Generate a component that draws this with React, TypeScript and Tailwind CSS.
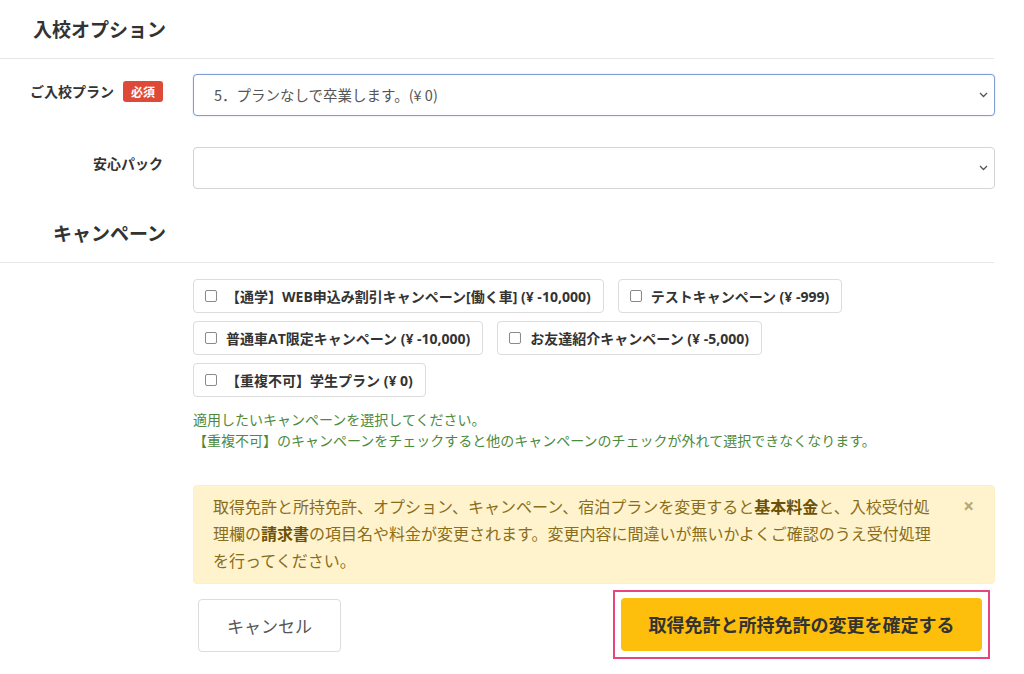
import React from 'react';

const jp = { fontFamily: '"Noto Sans CJK JP", "Noto Sans", sans-serif' };
const mixed = { fontFamily: '"Open Sans", "Noto Sans CJK JP", sans-serif' };

const campaigns = [
  ['【通学】WEB申込み割引キャンペーン[働く車] (¥ -10,000)', 'テストキャンペーン (¥ -999)'],
  ['普通車AT限定キャンペーン (¥ -10,000)', 'お友達紹介キャンペーン (¥ -5,000)'],
  ['【重複不可】学生プラン (¥ 0)'],
];

const Chevron: React.FC = () => (
  <svg width="9" height="6" viewBox="0 0 9 6" className="shrink-0">
    <path d="M1 1l3.5 3.5L8 1" fill="none" stroke="#555" strokeWidth="1.3" />
  </svg>
);

const SelectBox: React.FC<{ value?: string; focused?: boolean }> = ({ value, focused }) => (
  <div
    className={`flex h-[42px] w-[802px] items-center justify-between rounded-[4px] border bg-white pl-[20px] pr-[6px] ${
      focused ? 'border-[#7f9dd2] shadow-[0_0_2px_rgba(102,140,210,0.35)]' : 'border-[#d4d4d4]'
    }`}
  >
    <span className="text-[14.5px] text-[#555]" style={jp}>{value}</span>
    <Chevron />
  </div>
);

const CheckItem: React.FC<{ label: string }> = ({ label }) => (
  <label className="flex h-[34px] items-center gap-[9px] rounded-[4px] border border-[#dcdcdc] bg-white pl-[11px] pr-[12px]">
    <span className="h-[12px] w-[12px] rounded-[2px] border border-[#8a8a8a] bg-white" />
    <span className="text-[14px] font-bold text-[#333]" style={mixed}>{label}</span>
  </label>
);

const App: React.FC = () => {
  return (
    <div className="h-[674px] w-[1024px] overflow-hidden bg-white pt-[14px] text-[#333]" style={jp}>
      <h2 className="w-[166px] text-right text-[19px] font-bold leading-[30px]">入校オプション</h2>
      <div className="mt-[14px] w-[994px] border-t border-[#e6e6e6]" />

      {/* ご入校プラン */}
      <div className="mt-[15px] flex items-start gap-[30px]">
        <div className="flex w-[163px] items-center justify-end gap-[9px] pt-[7px]">
          <span className="text-[14px] font-bold leading-[21px]">ご入校プラン</span>
          <span className="rounded-[3px] bg-[#df4a38] px-[8px] text-[12px] font-bold leading-[21px] text-white">必須</span>
        </div>
        <SelectBox value="5．プランなしで卒業します。(¥ 0)" focused />
      </div>

      {/* 安心パック */}
      <div className="mt-[31px] flex items-start gap-[30px]">
        <div className="flex w-[163px] justify-end pt-[6px]">
          <span className="text-[14px] font-bold leading-[21px]">安心パック</span>
        </div>
        <SelectBox />
      </div>

      <h2 className="mt-[29px] w-[166px] text-right text-[19px] font-bold leading-[30px]">キャンペーン</h2>
      <div className="mt-[14px] w-[994px] border-t border-[#e6e6e6]" />

      <div className="ml-[193px] w-[802px]">
        <div className="mt-[16px] flex flex-col gap-[8px]">
          {campaigns.map((row, i) => (
            <div key={i} className="flex gap-[14px]">
              {row.map((c) => (
                <CheckItem key={c} label={c} />
              ))}
            </div>
          ))}
        </div>

        <p className="mt-[12px] text-[14px] leading-[21px] text-[#4e8a3c]">
          適用したいキャンペーンを選択してください。
          <br />
          【重複不可】のキャンペーンをチェックすると他のキャンペーンのチェックが外れて選択できなくなります。
        </p>

        <div className="relative mt-[34px] rounded-[4px] border border-[#fdf0c4] bg-[#fff3cd] pb-[9px] pl-[19px] pr-[40px] pt-[7px]">
          <p className="whitespace-nowrap text-[16px] leading-[27px] text-[#8a6d1a]">
            取得免許と所持免許、オプション、キャンペーン、宿泊プランを変更すると<b className="text-[#6b5208]">基本料金</b>と、入校受付処
            <br />
            理欄の<b className="text-[#6b5208]">請求書</b>の項目名や料金が変更されます。変更内容に間違いが無いかよくご確認のうえ受付処理
            <br />
            を行ってください。
          </p>
          <span className="absolute right-[20px] top-[7px] text-[19px] font-bold leading-[27px] text-[#b9a873]" style={mixed}>×</span>
        </div>

        <div className="flex items-start justify-between">
          <button className="ml-[5px] mt-[15px] h-[53px] w-[143px] rounded-[4px] border border-[#dcdcdc] bg-white text-[17px] text-[#555]">
            キャンセル
          </button>
          <div className="mr-[5px] mt-[6px] border-2 border-[#e8457f] p-[6px]">
            <button className="h-[53px] w-[361px] rounded-[4px] bg-[#fdbe0c] text-[18px] font-bold text-[#333]">
              取得免許と所持免許の変更を確定する
            </button>
          </div>
        </div>
      </div>
    </div>
  );
};

export default App;
